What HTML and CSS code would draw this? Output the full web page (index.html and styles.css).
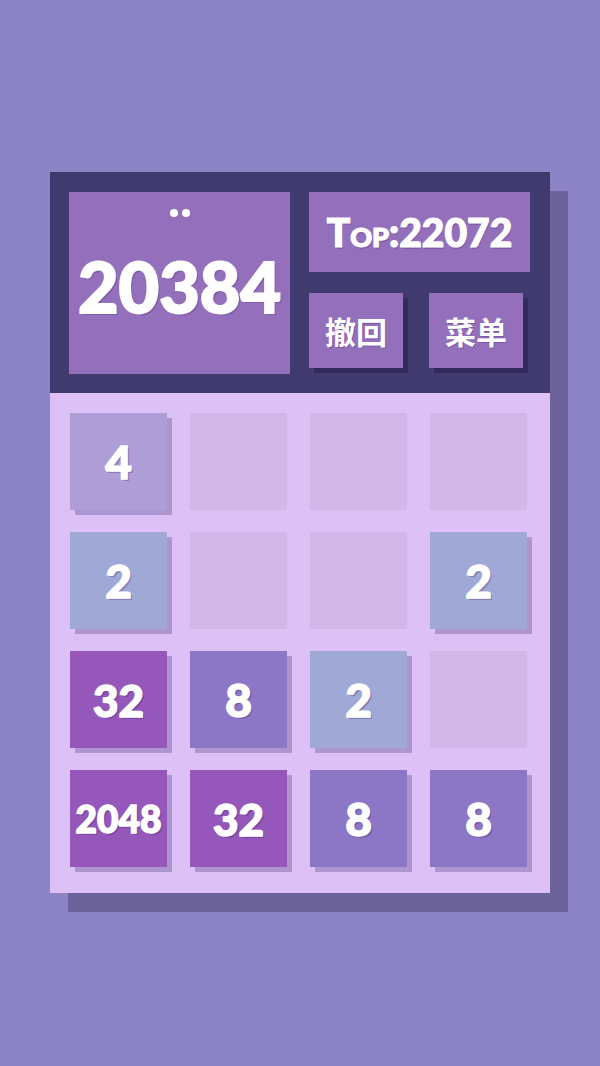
FILE: index.html
```html
<!DOCTYPE html>
<html lang="zh">
<head>
<meta charset="utf-8">
<title>2048</title>
<link rel="stylesheet" href="styles.css">
</head>
<body>
<div class="game">
  <div class="header">
    <div class="score-box">
      <div class="dots"><span class="dot"></span><span class="dot"></span></div>
      <div class="score">20384</div>
    </div>
    <div class="side">
      <div class="top-box">Top:22072</div>
      <div class="buttons">
        <div class="btn">撤回</div>
        <div class="btn">菜单</div>
      </div>
    </div>
  </div>
  <div class="board">
    <div class="cell t4">4</div>
    <div class="cell empty"></div>
    <div class="cell empty"></div>
    <div class="cell empty"></div>

    <div class="cell t2">2</div>
    <div class="cell empty"></div>
    <div class="cell empty"></div>
    <div class="cell t2">2</div>

    <div class="cell t32">32</div>
    <div class="cell t8">8</div>
    <div class="cell t2">2</div>
    <div class="cell empty"></div>

    <div class="cell t2048">2048</div>
    <div class="cell t32">32</div>
    <div class="cell t8">8</div>
    <div class="cell t8">8</div>
  </div>
</div>
</body>
</html>
```

FILE: styles.css
```css
html, body {
  margin: 0;
  padding: 0;
}
body {
  background: #8d84c7;
  width: 600px;
  height: 1066px;
  overflow: hidden;
  font-family: "Lato", "DejaVu Sans", sans-serif;
}
.game {
  width: 500px;
  margin: 172px 0 0 50px;
  box-shadow: 18px 19px 0 #6b6399;
}
.header {
  background: #413a6e;
  height: 221px;
  box-sizing: border-box;
  padding: 20px 20px 19px 19px;
  display: flex;
  gap: 19px;
}
.score-box {
  width: 221px;
  height: 182px;
  background: #9470bc;
  display: flex;
  flex-direction: column;
  align-items: center;
  color: #fff;
}
.dots {
  display: flex;
  gap: 4px;
  margin-top: 17px;
}
.dot {
  width: 8px;
  height: 8px;
  border-radius: 50%;
  background: #fff;
}
.score {
  margin-top: 34px;
  font-size: 70px;
  font-weight: 900;
  line-height: 1;
  -webkit-text-stroke: 2px #fff;
  text-shadow: 2px 2px 0 rgba(60, 30, 100, 0.25);
}
.side {
  width: 221px;
  display: flex;
  flex-direction: column;
}
.top-box {
  height: 80px;
  background: #9470bc;
  color: #fff;
  display: flex;
  align-items: center;
  justify-content: center;
  font-size: 39px;
  font-weight: 900;
  font-variant: small-caps;
  -webkit-text-stroke: 1.2px #fff;
  text-shadow: 1px 2px 0 rgba(60, 30, 100, 0.25);
}
.buttons {
  margin-top: 21px;
  display: flex;
  gap: 26px;
}
.btn {
  width: 94px;
  height: 75px;
  background: #9470bc;
  box-shadow: 5px 5px 0 #312a5a;
  color: #fff;
  display: flex;
  align-items: center;
  justify-content: center;
  font-family: "Noto Sans CJK SC", sans-serif;
  font-weight: 700;
  font-size: 31px;
  text-shadow: 1px 1px 0 rgba(60, 30, 100, 0.3);
}
.board {
  background: #dcc0f6;
  height: 500px;
  box-sizing: border-box;
  padding: 20px 23px 23px 20px;
  display: grid;
  grid-template-columns: repeat(4, 97px);
  grid-template-rows: repeat(4, 97px);
  gap: 22px 23px;
}
.cell {
  display: flex;
  align-items: center;
  justify-content: center;
  color: #fff;
  font-weight: 900;
  font-size: 46px;
  -webkit-text-stroke: 1.5px #fff;
  text-shadow: 2px 2px 0 rgba(60, 30, 100, 0.28);
  box-shadow: 5px 5px 0 #ad96cf;
}
.empty {
  background: #d3b7e9;
  box-shadow: none;
}
.t2 { background: #a0a8d6; }
.t4 { background: #ae9dd7; }
.t8 { background: #8c77c6; }
.t32 { background: #9558ba; font-size: 44px; }
.t2048 { background: #9558ba; font-size: 37px; }
```
